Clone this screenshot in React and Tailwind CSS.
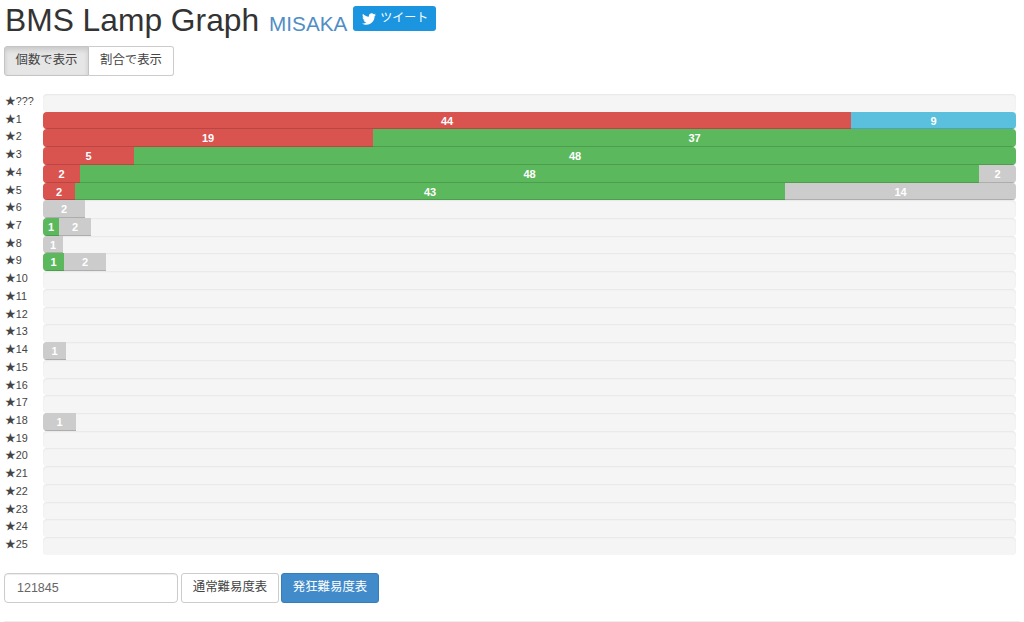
import { FaTwitter } from 'react-icons/fa';

const RED = 'bg-[#d9534f]';
const GREEN = 'bg-[#5cb85c]';
const BLUE = 'bg-[#5bc0de]';
const GRAY = 'bg-[#cccccc]';

// each segment: [count, pixel width of the 973px track, colour]
const rows = [
  { label: '???', bars: [] },
  { label: '1', bars: [[44, 808, RED], [9, 165, BLUE]] },
  { label: '2', bars: [[19, 330, RED], [37, 643, GREEN]] },
  { label: '3', bars: [[5, 91, RED], [48, 882, GREEN]] },
  { label: '4', bars: [[2, 37, RED], [48, 899, GREEN], [2, 37, GRAY]] },
  { label: '5', bars: [[2, 32, RED], [43, 710, GREEN], [14, 231, GRAY]] },
  { label: '6', bars: [[2, 42, GRAY]] },
  { label: '7', bars: [[1, 16, GREEN], [2, 32, GRAY]] },
  { label: '8', bars: [[1, 20, GRAY]] },
  { label: '9', bars: [[1, 21, GREEN], [2, 42, GRAY]] },
  { label: '10', bars: [] },
  { label: '11', bars: [] },
  { label: '12', bars: [] },
  { label: '13', bars: [] },
  { label: '14', bars: [[1, 23, GRAY]] },
  { label: '15', bars: [] },
  { label: '16', bars: [] },
  { label: '17', bars: [] },
  { label: '18', bars: [[1, 33, GRAY]] },
  { label: '19', bars: [] },
  { label: '20', bars: [] },
  { label: '21', bars: [] },
  { label: '22', bars: [] },
  { label: '23', bars: [] },
  { label: '24', bars: [] },
  { label: '25', bars: [] },
];

const fontStack = "font-['Liberation_Sans','Noto_Sans_CJK_JP',sans-serif]";

const App = () => {
  return (
    <div className={`${fontStack} w-[1024px] h-[622px] overflow-hidden bg-white text-[#333333] text-sm px-[4px]`}>
      {/* Title */}
      <div className="flex items-start h-[46px]">
        <h1 className="text-[31.75px] leading-[40px] font-normal ml-px">BMS Lamp Graph</h1>
        <a className="text-[20.7px] leading-[24px] text-[#4f8dc6] ml-[10px] mt-[12px]">MISAKA</a>
        <a className="flex items-center ml-[6px] mt-[6px] w-[83px] h-[25px] rounded-[3px] bg-[#1b95e0] text-white text-[12px] pl-[9px] gap-[4px]">
          <FaTwitter className="w-[14px] h-[14px]" />
          ツイート
        </a>
      </div>

      {/* View switch */}
      <div className="flex h-[30px]">
        <button className="w-[85px] rounded-l-[3px] border border-[#c4c4c4] bg-[#e6e6e6] shadow-[inset_0_3px_5px_rgba(0,0,0,0.125)] text-[12.4px] text-[#444444]">
          個数で表示
        </button>
        <button className="w-[85px] rounded-r-[3px] border border-l-0 border-[#cccccc] bg-white text-[12.4px] text-[#444444]">
          割合で表示
        </button>
      </div>

      {/* Graph */}
      <div className="mt-[18px] flex flex-col">
        {rows.map((row) => (
          <div key={row.label} className="flex h-[17.72px]">
            <div className="w-[39px] shrink-0 text-[10.8px] leading-[15px] pl-px text-[#444444]">★{row.label}</div>
            <div className="w-[973px] h-[17.72px] flex overflow-hidden rounded-[4px] bg-[#f5f5f5] shadow-[inset_0_1px_2px_rgba(0,0,0,0.06)]">
              {row.bars.map(([count, width, color], i) => (
                <div
                  key={i}
                  className={`${color} h-full text-center text-white text-[11px] font-bold leading-[18px] shadow-[inset_0_-1px_0_rgba(0,0,0,0.15)]`}
                  style={{ width: `${(width / 973) * 100}%` }}
                >
                  {count}
                </div>
              ))}
            </div>
          </div>
        ))}
      </div>

      {/* Table form */}
      <div className="flex mt-[18px] h-[30px]">
        <input
          readOnly
          value="121845"
          className="w-[174px] h-[30px] rounded-[4px] border border-[#cccccc] px-[12px] text-[12.5px] text-[#666666] shadow-[inset_0_1px_1px_rgba(0,0,0,0.075)] outline-none"
        />
        <button className="w-[98px] ml-[3px] rounded-[3px] border border-[#cccccc] bg-white text-[12.4px] text-[#444444]">
          通常難易度表
        </button>
        <button className="w-[98px] ml-[2px] rounded-[3px] border border-[#357ebd] bg-[#428bca] text-[12.4px] text-white">
          発狂難易度表
        </button>
      </div>

      <hr className="mt-[18px] border-t border-[#eeeeee]" />
    </div>
  );
};

export default App;
